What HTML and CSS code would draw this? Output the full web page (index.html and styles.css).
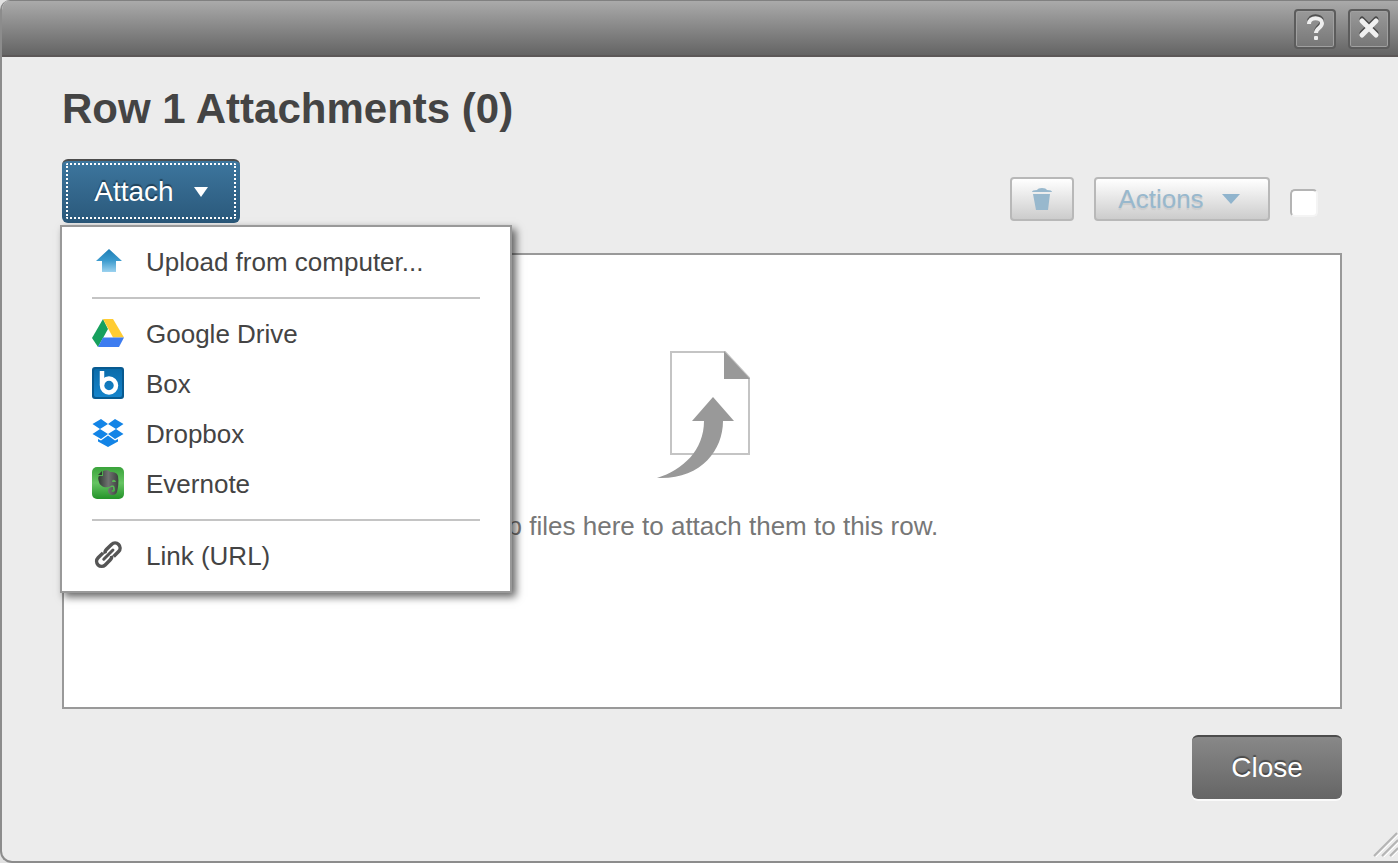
FILE: index.html
```html
<!DOCTYPE html>
<html lang="en">
<head>
  <meta charset="UTF-8">
  <meta name="viewport" content="width=device-width, initial-scale=1.0">
  <title>Row 1 Attachments</title>
  <link rel="stylesheet" href="styles.css">
</head>
<body>
  <div class="dialog" role="dialog" aria-labelledby="dialogTitle">
    <!-- Title bar -->
    <header class="title-bar">
      <button class="bar-btn" type="button" aria-label="Help">
        <svg width="38" height="36" viewBox="0 0 38 36" fill="none">
          <path d="M13 11c0-8 13-7 13-1c0 5-6 5-6 11" stroke="#505050" stroke-width="4"/>
          <path d="M13 13c0-8 13-7 13-1c0 5-6 5-6 10" stroke="#eee" stroke-width="4"/>
          <rect x="18" y="25" width="4" height="4" rx="1" fill="#eee"/>
        </svg>
      </button>
      <button class="bar-btn" type="button" aria-label="Close window">
        <svg width="38" height="36" viewBox="0 0 38 36" fill="none" stroke-linecap="round">
          <path d="M12 8l14 14M26 8L12 22" stroke="#484848" stroke-width="5"/>
          <path d="M12 10l14 14M26 10L12 24" stroke="#f0f0f0" stroke-width="5"/>
        </svg>
      </button>
    </header>

    <main class="content">
      <h1 id="dialogTitle">Row 1 Attachments (0)</h1>

      <!-- Toolbar -->
      <div class="toolbar">
        <div class="attach">
          <button class="btn attach-btn" id="attachBtn" type="button" aria-haspopup="true" aria-expanded="true">
            Attach
            <svg width="14" height="10" viewBox="0 0 14 10"><path d="M0 0h14L7 10z" fill="#fff"/></svg>
          </button>

          <!-- Attach menu -->
          <div class="menu" id="attachMenu">
            <button class="menu-item" type="button">
              <svg width="32" height="32" viewBox="0 0 32 32">
                <defs>
                  <linearGradient id="upload" x1="0" y1="0" x2="0" y2="1">
                    <stop offset="0" stop-color="#1c7db5"/>
                    <stop offset=".5" stop-color="#3c9bce"/>
                    <stop offset="1" stop-color="#9cd2ef"/>
                  </linearGradient>
                </defs>
                <path d="M17 4l13 12h-6v11H10V16H4z" fill="url(#upload)"/>
              </svg>
              Upload from computer...
            </button>
            <hr>
            <button class="menu-item" type="button">
              <svg width="32" height="32" viewBox="0 0 32 32">
                <path d="M11 2L0 21l6 9L16 12z" fill="#17a05e"/>
                <path d="M11 2h10l11 18.5H21z" fill="#fc3"/>
                <path d="M11 20.5h21L27 30H6z" fill="#3d7cf0"/>
              </svg>
              Google Drive
            </button>
            <button class="menu-item" type="button">
              <svg width="32" height="32" viewBox="0 0 32 32">
                <defs>
                  <linearGradient id="box" x1="0" y1="0" x2="0" y2="1">
                    <stop offset="0" stop-color="#0a6cab"/>
                    <stop offset="1" stop-color="#1584cb"/>
                  </linearGradient>
                </defs>
                <rect width="32" height="32" rx="3" fill="#085a90"/>
                <rect x="2" y="2" width="28" height="28" rx="2" fill="url(#box)"/>
                <g fill="none" stroke="#fff" stroke-width="4.5">
                  <path d="M10 4v14"/>
                  <circle cx="17" cy="18.5" r="7"/>
                </g>
              </svg>
              Box
            </button>
            <button class="menu-item" type="button">
              <svg width="32" height="32" viewBox="0 0 32 32" fill="#1384e6">
                <path d="M9 2l7 5-8 5-7.500-5zM23 2l8.500 5-7.500 5-8-5zM8 12l8 5-7 5-8.500-5zM24 12l7.500 5-8.500 5-7-5z"/>
                <path d="M16 18.500l7 5 3-1.500v2.500L16 30 6 24.500V22l3 1.500z"/>
              </svg>
              Dropbox
            </button>
            <button class="menu-item" type="button">
              <svg width="32" height="32" viewBox="0 0 32 32">
                <defs>
                  <linearGradient id="note" x1="0" y1="0" x2="0" y2="1">
                    <stop offset="0" stop-color="#3aa33b"/>
                    <stop offset=".5" stop-color="#66c463"/>
                    <stop offset="1" stop-color="#249329"/>
                  </linearGradient>
                  <linearGradient id="head" x1="0" y1="0" x2="1" y2="0">
                    <stop offset="0" stop-color="#2f3a32"/>
                    <stop offset=".5" stop-color="#707371"/>
                    <stop offset="1" stop-color="#3c423e"/>
                  </linearGradient>
                </defs>
                <rect width="32" height="32" rx="5" fill="url(#note)"/>
                <path d="M11 4c3-1 6-1 7 1c5 0 7 1 8 4c1 6 0 12-1 16c-1 4-9 4-9-1c0-3 2-4 5-4v3c-2 0-2 2 0 2c3 0 2-4 1-6c-2-1-3 0-5 1c-5 1-9-1-10-5c-1-3-1-5 0-6h4z" fill="url(#head)"/>
                <path d="M6 8l4-4v4z" fill="#2f3a32"/>
                <path d="M20 15c0-3 3-3 4 0z" fill="#58b255"/>
              </svg>
              Evernote
            </button>
            <hr>
            <button class="menu-item" type="button">
              <svg width="32" height="32" viewBox="0 0 32 32" fill="none" stroke="#555" stroke-width="3.5">
                <g transform="rotate(-45 16 16)">
                  <path d="M14 11H7a5 5 0 0 0 0 10h7q3 0 4-2"/>
                  <path d="M19 21h7a5 5 0 0 0 0-10h-7q-3 0-4 2"/>
                  <path d="M10 16h13" stroke-width="3" stroke-linecap="round"/>
                </g>
              </svg>
              Link (URL)
            </button>
          </div>
        </div>

        <div class="bulk-actions">
          <button class="btn-light trash-btn" type="button" aria-label="Delete" disabled>
            <svg width="20" height="24" viewBox="0 0 20 24" fill="#98b8cd">
              <path d="M0 5q0-2 5-2q1-2 5-2t5 2q5 0 5 2z"/>
              <path d="M1 7h17l-2 16H4z"/>
            </svg>
          </button>
          <button class="btn-light actions-btn" type="button" disabled>
            Actions
            <svg width="18" height="10" viewBox="0 0 18 10"><path d="M0 0h18L9 10z" fill="#90b4cd"/></svg>
          </button>
          <input class="select-all" type="checkbox" aria-label="Select all">
        </div>
      </div>

      <!-- Drop area -->
      <section class="drop-area">
        <svg width="98" height="130" viewBox="-4 0 98 130">
          <path d="M14 2h54l24 26v76H14z" fill="#fff" stroke="#c4c4c4" stroke-width="2"/>
          <path d="M67 1l26 28H67z" fill="#999"/>
          <path d="M56 47l21 24H66C66 101 43 130 0 128C26 120 47 100 47 71H35z" fill="#999"/>
        </svg>
        <p>Drop files here to attach them to this row.</p>
      </section>

      <footer class="footer">
        <button class="btn close-btn" type="button">Close</button>
      </footer>
    </main>

    <svg class="resize-grip" width="26" height="30" viewBox="0 0 26 30" fill="none">
      <path d="M2 25L25 2M10 25L26 9M18 25l8-8" stroke="#b4b4b4" stroke-width="2"/>
      <path d="M4 26L26 4M12 26l14-14M20 26l6-6" stroke="#fff"/>
    </svg>
  </div>

  <script>
    // Open and close the attach menu
    document.getElementById('attachBtn').addEventListener('click', function () {
      const closed = document.getElementById('attachMenu').classList.toggle('hidden');
      this.setAttribute('aria-expanded', String(!closed));
    });
  </script>
</body>
</html>
```

FILE: styles.css
```css
* {
  box-sizing: border-box;
}
body {
  margin: 0;
  background: #e2e2e2;
  color: #444;
  font-family: "Liberation Sans", Arial, sans-serif;
  font-size: 26px;
}
button {
  font-family: inherit;
  font-size: inherit;
  cursor: pointer;
}
svg {
  display: block;
  flex: none;
}
.dialog {
  position: relative;
  display: flex;
  flex-direction: column;
  min-height: 100vh;
  background: #ececec;
  border: 2px solid #8c8c8c;
  border-width: 0 0 2px 2px;
  border-radius: 10px 0 0 12px;
  overflow: hidden;
}
.title-bar {
  display: flex;
  justify-content: flex-end;
  gap: 12px;
  height: 57px;
  padding: 8px 8px 0 0;
  background: linear-gradient(#aaa, #646464);
  border-top: 1px solid #808080;
  border-bottom: 2px solid #5c5858;
}
.bar-btn {
  width: 42px;
  height: 40px;
  padding: 0;
  background: linear-gradient(#999, #777);
  border: 2px solid #5c5c5c;
  border-radius: 4px;
  box-shadow: inset 0 0 0 1px #a0a0a0;
}
.content {
  flex: 1;
  display: flex;
  flex-direction: column;
  padding: 28px 56px 62px 60px;
}
h1 {
  margin: 0 0 26px;
  font-size: 42px;
  line-height: 48px;
}
.toolbar {
  display: flex;
  justify-content: space-between;
  align-items: flex-start;
  height: 94px;
}
.btn {
  height: 64px;
  color: #fff;
  font-size: 28px;
  border: 0;
  border-top: 2px solid #4c4c4c;
  border-radius: 6px;
  text-shadow: 0 -2px 1px rgba(0, 0, 0, 0.4);
}
.attach {
  position: relative;
}
.attach-btn {
  display: flex;
  align-items: center;
  justify-content: center;
  gap: 20px;
  width: 178px;
  background: linear-gradient(#3d769e, #2a587a);
  outline: 2px dotted #fff;
  outline-offset: -6px;
}
.menu {
  position: absolute;
  top: 66px;
  left: -2px;
  z-index: 1;
  width: 452px;
  padding: 10px 30px;
  background: #fff;
  border: 2px solid #999;
  box-shadow: 4px 4px 8px rgba(0, 0, 0, 0.6);
}
.menu hr {
  height: 2px;
  margin: 10px 0;
  background: #c4c4c4;
  border: 0;
}
.menu-item {
  display: flex;
  align-items: center;
  gap: 22px;
  width: 100%;
  height: 50px;
  padding: 0;
  background: none;
  border: 0;
  color: #444;
  text-align: left;
}
.menu-item svg {
  margin-bottom: 2px;
}
.menu-item:hover {
  background: #f0f0f0;
}
.bulk-actions {
  display: flex;
  align-items: flex-start;
  gap: 20px;
  padding: 18px 24px 0 0;
}
.btn-light {
  display: flex;
  align-items: center;
  justify-content: center;
  gap: 18px;
  height: 44px;
  padding: 0;
  background: linear-gradient(#fff, #ccc);
  border: 2px solid #b8b8b8;
  border-radius: 4px;
  color: #98b8cd;
  text-shadow: 0 2px 1px #ccc;
}
.trash-btn {
  width: 64px;
}
.actions-btn {
  width: 176px;
  padding-right: 6px;
}
.select-all {
  appearance: none;
  width: 28px;
  height: 28px;
  margin: 12px 0 0;
  background: #fff;
  border: 2px solid #f4f4f4;
  border-top-color: #b4b4b4;
  border-left-color: #b4b4b4;
  border-radius: 5px;
}
.select-all:checked {
  background: #3d769e;
}
.drop-area {
  flex: 1;
  display: flex;
  flex-direction: column;
  align-items: center;
  padding-top: 95px;
  background: #fff;
  border: 2px solid #999;
  color: #777;
}
.drop-area p {
  margin: 30px 0 0;
  line-height: 32px;
}
.footer {
  display: flex;
  justify-content: flex-end;
  margin-top: 26px;
}
.close-btn {
  width: 150px;
  background: linear-gradient(#888, #656565);
  box-shadow: 0 2px 0 #fafafa;
}
.resize-grip {
  position: absolute;
  right: 0;
  bottom: 0;
}
.hidden {
  display: none;
}
```
